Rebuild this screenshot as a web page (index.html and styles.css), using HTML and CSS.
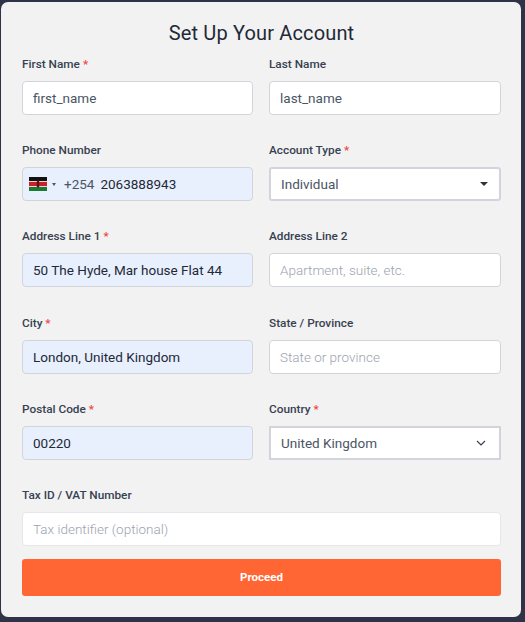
FILE: index.html
```html
<!DOCTYPE html>
<html lang="en">
<head>
    <meta charset="UTF-8">
    <meta name="viewport" content="width=device-width, initial-scale=1.0">
    <title>Set Up Your Account</title>
    <link rel="stylesheet" href="styles.css">
</head>
<body>
    <form class="card">
        <h1>Set Up Your Account</h1>
        <div class="grid">
            <div class="field">
                <label>First Name <span class="req">*</span></label>
                <input class="input" type="text" value="first_name">
            </div>
            <div class="field">
                <label>Last Name</label>
                <input class="input" type="text" value="last_name">
            </div>

            <div class="field">
                <label>Phone Number</label>
                <div class="input autofill phone">
                    <svg class="flag" viewBox="0 0 18 14" width="18" height="14">
                        <rect width="18" height="14" fill="#fff"/>
                        <rect width="18" height="4" fill="#111"/>
                        <rect y="4.8" width="18" height="4.4" fill="#c8202c"/>
                        <rect y="10" width="18" height="4" fill="#1a7a32"/>
                        <ellipse cx="9" cy="7" rx="1.6" ry="3.6" fill="#8c1c1c"/>
                        <rect x="8.6" y="3.8" width="0.8" height="6.4" fill="#111"/>
                    </svg>
                    <span class="flag-caret"></span>
                    <span class="dial">+254</span>
                    <span class="phone-num">2063888943</span>
                </div>
            </div>
            <div class="field">
                <label>Account Type <span class="req">*</span></label>
                <div class="select">
                    <span>Individual</span>
                    <span class="caret"></span>
                </div>
            </div>

            <div class="field">
                <label>Address Line 1 <span class="req">*</span></label>
                <input class="input autofill" type="text" value="50 The Hyde, Mar house Flat 44">
            </div>
            <div class="field">
                <label>Address Line 2</label>
                <input class="input" type="text" placeholder="Apartment, suite, etc.">
            </div>

            <div class="field">
                <label>City <span class="req">*</span></label>
                <input class="input autofill" type="text" value="London, United Kingdom">
            </div>
            <div class="field">
                <label>State / Province</label>
                <input class="input" type="text" placeholder="State or province">
            </div>

            <div class="field">
                <label>Postal Code <span class="req">*</span></label>
                <input class="input autofill" type="text" value="00220">
            </div>
            <div class="field">
                <label>Country <span class="req">*</span></label>
                <div class="select square">
                    <span>United Kingdom</span>
                    <svg class="chevron" viewBox="0 0 10 6" width="10" height="6">
                        <path d="M1 1l4 4 4-4" fill="none" stroke="#374151" stroke-width="1.2"/>
                    </svg>
                </div>
            </div>

            <div class="field wide">
                <label>Tax ID / VAT Number</label>
                <input class="input light" type="text" placeholder="Tax identifier (optional)">
            </div>
        </div>
        <button class="proceed" type="button">Proceed</button>
    </form>
</body>
</html>
```

FILE: styles.css
```css
* {
    margin: 0;
    padding: 0;
    box-sizing: border-box;
}

html, body {
    height: 100%;
}

body {
    font-family: Roboto, 'Liberation Sans', sans-serif;
    background: #2f3347;
    padding: 2px 4px 5px 1px;
}

.card {
    height: 615px;
    background: #f2f2f2;
    border-radius: 7px;
    padding: 19px 20px 0 21px;
}

h1 {
    font-size: 20px;
    font-weight: 400;
    letter-spacing: 0.15px;
    line-height: 24px;
    color: #1f2937;
    text-align: center;
    margin-bottom: 11px;
}

.grid {
    display: grid;
    grid-template-columns: 231px 232px;
    column-gap: 16px;
    row-gap: 27.2px;
}

.field {
    display: flex;
    flex-direction: column;
}

.wide {
    grid-column: 1 / 3;
}

label {
    font-size: 11.8px;
    font-weight: 500;
    line-height: 16px;
    color: #374151;
    margin-bottom: 9px;
    height: 16px;
}

.req {
    color: #ef4444;
}

.input {
    width: 100%;
    height: 34px;
    border: 1px solid #d1d5db;
    border-radius: 4px;
    background: #fff;
    padding: 0 10px;
    font-family: inherit;
    font-size: 13.5px;
    color: #4b5563;
    outline: none;
}

.input::placeholder {
    color: #9ca3af;
    font-weight: 300;
}

.input.light {
    border-color: #e5e7eb;
}

.autofill {
    background: #e8f0fe;
    color: #1f2937;
}

.phone {
    display: flex;
    align-items: center;
    padding-left: 6px;
}

.flag {
    display: block;
}

.flag-caret {
    width: 0;
    height: 0;
    margin-left: 5px;
    border-left: 2.5px solid transparent;
    border-right: 2.5px solid transparent;
    border-top: 3px solid #555;
}

.dial {
    margin-left: 8px;
    color: #4b5563;
}

.phone-num {
    margin-left: 6px;
}

.select {
    height: 34px;
    display: flex;
    align-items: center;
    justify-content: space-between;
    background: #fff;
    border: 2px solid #d1d5db;
    border-radius: 3px;
    padding: 0 10px;
    font-size: 13.5px;
    color: #4b5563;
}

.select.square {
    border-radius: 0;
}

.caret {
    width: 0;
    height: 0;
    margin-right: 1px;
    border-left: 4.5px solid transparent;
    border-right: 4.5px solid transparent;
    border-top: 4.5px solid #333;
}

.chevron {
    margin-right: 3px;
}

.proceed {
    display: block;
    width: 100%;
    height: 37px;
    margin-top: 13px;
    border: none;
    border-radius: 3px;
    background: #ff6633;
    color: #fff;
    font-family: inherit;
    font-size: 11.5px;
    font-weight: 700;
}
```
